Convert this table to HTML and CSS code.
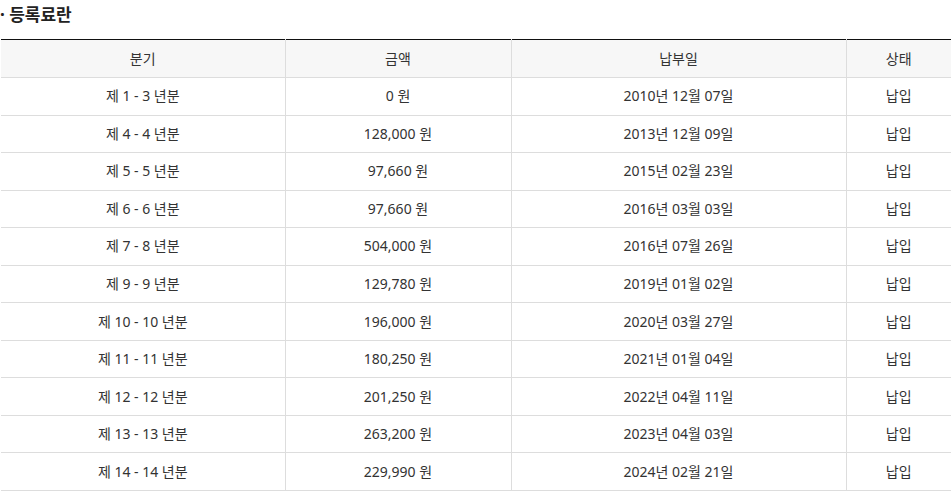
FILE: index.html
```html
<!DOCTYPE html>
<html lang="ko">
<head>
<meta charset="utf-8">
<link rel="stylesheet" href="styles.css">
</head>
<body>
<h3 class="title">· 등록료란</h3>
<table class="fee">
<colgroup>
<col class="c1"><col class="c2"><col class="c3"><col class="c4">
</colgroup>
<thead>
<tr><th>분기</th><th>금액</th><th>납부일</th><th>상태</th></tr>
</thead>
<tbody>
<tr><td>제 1 - 3 년분</td><td>0 원</td><td>2010년 12월 07일</td><td>납입</td></tr>
<tr><td>제 4 - 4 년분</td><td>128,000 원</td><td>2013년 12월 09일</td><td>납입</td></tr>
<tr><td>제 5 - 5 년분</td><td>97,660 원</td><td>2015년 02월 23일</td><td>납입</td></tr>
<tr><td>제 6 - 6 년분</td><td>97,660 원</td><td>2016년 03월 03일</td><td>납입</td></tr>
<tr><td>제 7 - 8 년분</td><td>504,000 원</td><td>2016년 07월 26일</td><td>납입</td></tr>
<tr><td>제 9 - 9 년분</td><td>129,780 원</td><td>2019년 01월 02일</td><td>납입</td></tr>
<tr><td>제 10 - 10 년분</td><td>196,000 원</td><td>2020년 03월 27일</td><td>납입</td></tr>
<tr><td>제 11 - 11 년분</td><td>180,250 원</td><td>2021년 01월 04일</td><td>납입</td></tr>
<tr><td>제 12 - 12 년분</td><td>201,250 원</td><td>2022년 04월 11일</td><td>납입</td></tr>
<tr><td>제 13 - 13 년분</td><td>263,200 원</td><td>2023년 04월 03일</td><td>납입</td></tr>
<tr><td>제 14 - 14 년분</td><td>229,990 원</td><td>2024년 02월 21일</td><td>납입</td></tr>
</tbody>
</table>
</body>
</html>
```
FILE: styles.css
```css
html, body {
  margin: 0;
  padding: 0;
  background: #fff;
}
body {
  font-family: "Noto Sans", "Noto Sans CJK KR", sans-serif;
  color: #333;
}
.title {
  margin: 0;
  padding: 3px 0 0 0;
  height: 39px;
  box-sizing: border-box;
  font-size: 17px;
  font-weight: 700;
  color: #222;
  line-height: 24px;
}
.fee {
  width: 950px;
  margin-left: 1px;
  border-collapse: collapse;
  table-layout: fixed;
  border-top: 1px solid #111;
  font-size: 14px;
}
.c1 { width: 284px; }
.c2 { width: 226px; }
.c3 { width: 335px; }
.c4 { width: 105px; }
.fee th, .fee td {
  height: 37.55px;
  box-sizing: border-box;
  padding: 0 4px;
  text-align: center;
  vertical-align: middle;
  border-bottom: 1px solid #ddd;
  border-left: 1px solid #ddd;
  font-weight: 400;
  color: #333;
  line-height: 20px;
}
.fee th:first-child, .fee td:first-child {
  border-left: none;
}
.fee th {
  background: #f7f7f7;
  height: 38px;
}
```
